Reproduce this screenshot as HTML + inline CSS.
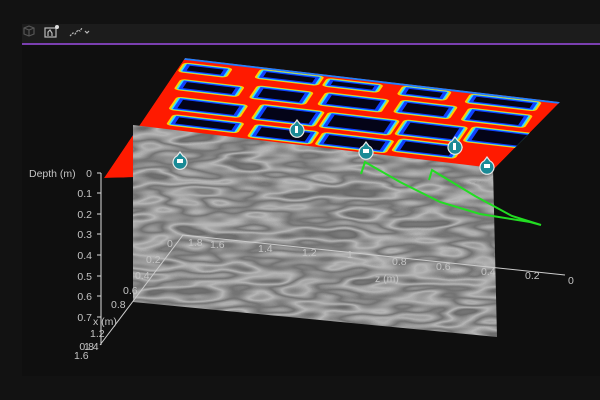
<!DOCTYPE html>
<html><head><meta charset="utf-8"><style>
html,body{margin:0;padding:0;background:#121212;width:600px;height:400px;overflow:hidden}
svg{display:block}
text{font-family:"Liberation Sans",sans-serif;fill:#c4c4c4;font-size:10.5px}
</style></head><body>
<svg width="600" height="400" viewBox="0 0 600 400">
<defs>
<filter id="gpr" x="0" y="0" width="100%" height="100%" color-interpolation-filters="sRGB">
<feTurbulence type="fractalNoise" baseFrequency="0.018 0.07" numOctaves="2" seed="7"/>
<feColorMatrix type="matrix" values="1 0 0 0 0  1 0 0 0 0  1 0 0 0 0  0 0 0 0 1"/>
<feComponentTransfer><feFuncR type="table" tableValues="0.55 0.5 0.42 0.72 0.45 0.7 0.5 0.55"/><feFuncG type="table" tableValues="0.55 0.5 0.42 0.72 0.45 0.7 0.5 0.55"/><feFuncB type="table" tableValues="0.55 0.5 0.42 0.72 0.45 0.7 0.5 0.55"/></feComponentTransfer>
</filter>
<clipPath id="gc"><polygon points="133,125 493,168 497,337 133,302"/></clipPath>
<clipPath id="hc"><polygon points="185,58 560,102 495,168 104,178"/></clipPath>
<g id="blocks">
<rect x="2" y="5" width="10" height="5"/><rect x="22" y="3" width="14" height="5"/><rect x="40" y="4" width="12" height="4"/><rect x="60" y="3" width="10" height="5"/><rect x="78" y="3" width="16" height="5"/>
<rect x="4" y="18" width="14" height="6"/><rect x="24" y="16" width="12" height="8"/><rect x="42" y="15" width="14" height="8"/><rect x="62" y="14" width="12" height="8"/><rect x="80" y="14" width="14" height="8"/>
<rect x="6" y="32" width="16" height="8"/><rect x="28" y="30" width="14" height="10"/><rect x="46" y="30" width="16" height="10"/><rect x="66" y="29" width="14" height="10"/><rect x="84" y="28" width="14" height="10"/>
<rect x="8" y="46" width="16" height="6"/><rect x="30" y="46" width="14" height="8"/><rect x="48" y="46" width="16" height="8"/><rect x="68" y="44" width="14" height="8"/>
</g>
</defs>
<rect x="22" y="24" width="578" height="352" fill="#0f0f0f"/>
<rect x="22" y="24" width="578" height="19" fill="#1c1c1c"/>
<rect x="22" y="43" width="578" height="2" fill="#7a3fb0"/>
<g fill="none" stroke="#555" stroke-width="1.2"><path d="M24 28l5-2 5 2v6l-5 2-5-2z M24 28l5 2 5-2 M29 30v6"/></g>
<g fill="none" stroke="#bbb" stroke-width="1.2"><rect x="45" y="28" width="11" height="9"/><path d="M48 36v-4l2-2 2 3v3"/></g>
<circle cx="57" cy="27" r="2" fill="#ddd"/>
<path d="M70 36l3-3 2 1 3-4 2 1 2-3" fill="none" stroke="#bbb" stroke-width="1.2" stroke-dasharray="2 1"/>
<path d="M85 31l2 2 2-2" fill="none" stroke="#bbb" stroke-width="1.2"/>
<g clip-path="url(#hc)">
<polygon points="185,58 560,102 495,168 104,178" fill="#ff1a00"/>
<g transform="matrix(3.75 0.44 -0.81 1.2 185 58)">
<use href="#blocks" fill="#ffe000" stroke="#ffd000" stroke-width="3.2" stroke-linejoin="round"/>
<use href="#blocks" fill="#30d0ff" stroke="#30e0ff" stroke-width="2" stroke-linejoin="round"/>
<use href="#blocks" fill="#040418" stroke="#1040ff" stroke-width="1"/>
<rect x="0" y="0" width="100" height="1.5" fill="#2080ff"/>
<rect x="0" y="58" width="30" height="3" fill="#ffe000"/><rect x="0" y="63" width="30" height="2" fill="#2050ff"/>
</g>
</g>
<g clip-path="url(#gc)"><rect x="130" y="120" width="370" height="220" fill="#888" filter="url(#gpr)"/></g>
<g stroke="#ddd" stroke-width="1" fill="none">
<path d="M101 173v172 M97 173h4 M97 193h4 M97 214h4 M97 234h4 M97 255h4 M97 276h4 M97 296h4 M97 317h4"/>
<path d="M100 345L183 235L565 275" stroke="#ccc"/>
</g>
<g text-anchor="end">
<text x="92" y="177">0</text><text x="92" y="197">0.1</text><text x="92" y="218">0.2</text><text x="92" y="238">0.3</text><text x="92" y="259">0.4</text><text x="92" y="280">0.5</text><text x="92" y="300">0.6</text><text x="92" y="321">0.7</text><text x="94" y="350">0.8</text>
</g>
<text x="29" y="177">Depth (m)</text>
<g style="font-size:9.5px">
<text x="167" y="247">0</text><text x="146" y="263">0.2</text><text x="135" y="279">0.4</text><text x="123" y="294">0.6</text><text x="111" y="308">0.8</text><text x="93" y="325">x (m)</text><text x="90" y="337">1.2</text><text x="84" y="350">1.4</text><text x="74" y="359">1.6</text>
<text x="188" y="246">1.8</text><text x="210" y="248">1.6</text><text x="258" y="252">1.4</text><text x="302" y="256">1.2</text><text x="347" y="258">1</text><text x="392" y="265">0.8</text><text x="436" y="270">0.6</text><text x="481" y="275">0.4</text><text x="525" y="279">0.2</text><text x="568" y="284">0</text><text x="375" y="282">z (m)</text>
</g>
<path d="M361 174L365 162L400 182L440 202L480 214L530 222L541 225L512 216L475 196L432 170L429 180" fill="none" stroke="#22dd22" stroke-width="2"/>
<g fill="#1a8a96" stroke="#e8e8e8" stroke-width="1.2">
<g transform="translate(180,162)"><path d="M0-10L-3-6A7 7 0 1 0 3-6Z"/></g>
<g transform="translate(297,130)"><path d="M0-10L-3-6A7 7 0 1 0 3-6Z"/></g>
<g transform="translate(366,152)"><path d="M0-10L-3-6A7 7 0 1 0 3-6Z"/></g>
<g transform="translate(455,147)"><path d="M0-10L-3-6A7 7 0 1 0 3-6Z"/></g>
<g transform="translate(487,167)"><path d="M0-10L-3-6A7 7 0 1 0 3-6Z"/></g>
</g>
<g fill="#fff"><rect x="177" y="159" width="6" height="4"/><rect x="295" y="126" width="3" height="7"/><rect x="363" y="149" width="6" height="4"/><rect x="453" y="143" width="3" height="7"/><rect x="484" y="164" width="6" height="4"/></g>
</svg>
</body></html>
